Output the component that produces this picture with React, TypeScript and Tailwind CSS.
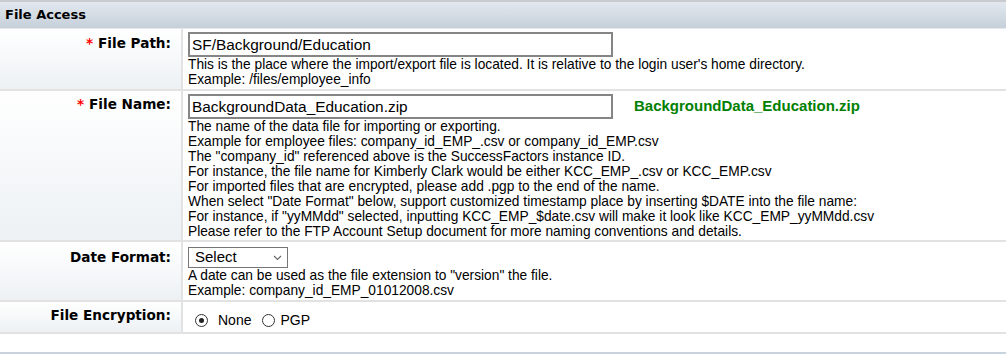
import React from "react";

const help = "text-[13.75px] leading-[15px] text-black";
const labelFont = { fontFamily: '"DejaVu Sans", Verdana, sans-serif' };

function Row({
  req,
  label,
  labelPt,
  children,
  contentClass,
}: {
  req?: boolean;
  label: string;
  labelPt: string;
  children: React.ReactNode;
  contentClass: string;
}) {
  return (
    <div className="flex border-b-2 border-[#e2e2e2]">
      <div
        className={
          "w-[183px] shrink-0 text-right pr-[10px] border-r-2 border-[#e2e2e2] bg-gradient-to-b from-white to-[#edf1f4] font-bold text-[13.6px] leading-[16px] text-black " +
          labelPt
        }
        style={labelFont}
      >
        {req && <span className="text-[#ff0000] mr-[5px]">*</span>}
        {label}
      </div>
      <div className={"flex-1 pl-[5px] " + contentClass}>{children}</div>
    </div>
  );
}

export default function App() {
  return (
    <div
      className="w-[1006px] h-[354px] bg-white overflow-hidden"
      style={{ fontFamily: '"Liberation Sans", Arial, sans-serif' }}
    >
      <div className="h-[2px] bg-[#c8ccd1]" />
      <div
        className="h-[26px] bg-gradient-to-b from-[#e2e8ee] to-[#c6d0da] pl-[5px] flex items-center font-bold text-[13px] text-black"
        style={labelFont}
      >
        File Access
      </div>
      <div className="h-[1px] bg-[#e6e9ec]" />

      <Row req label="File Path:" labelPt="pt-[6px]" contentClass="pt-[3px] pb-[2px]">
        <input
          readOnly
          value="SF/Background/Education"
          className="block w-[425px] h-[25px] border-2 border-[#858585] px-[2px] text-[15.4px] text-black outline-none"
          style={{ fontFamily: '"Liberation Sans", Arial, sans-serif' }}
        />
        <div className={help}>
          This is the place where the import/export file is located. It is relative to the login user's home directory.
          <br />
          Example: /files/employee_info
        </div>
      </Row>

      <Row req label="File Name:" labelPt="pt-[5px]" contentClass="pt-[3px] pb-[1px]">
        <div className="flex items-center">
          <input
            readOnly
            value="BackgroundData_Education.zip"
            className="block w-[425px] h-[25px] border-2 border-[#858585] px-[2px] text-[15.4px] text-black outline-none"
            style={{ fontFamily: '"Liberation Sans", Arial, sans-serif' }}
          />
          <span className="ml-[21px] text-[15px] font-bold text-[#008000]">BackgroundData_Education.zip</span>
        </div>
        <div className={help}>
          The name of the data file for importing or exporting.
          <br />
          Example for employee files: company_id_EMP_.csv or company_id_EMP.csv
          <br />
          The "company_id" referenced above is the SuccessFactors instance ID.
          <br />
          For instance, the file name for Kimberly Clark would be either KCC_EMP_.csv or KCC_EMP.csv
          <br />
          For imported files that are encrypted, please add .pgp to the end of the name.
          <br />
          When select "Date Format" below, support customized timestamp place by inserting $DATE into the file name:
          <br />
          For instance, if "yyMMdd" selected, inputting KCC_EMP_$date.csv will make it look like KCC_EMP_yyMMdd.csv
          <br />
          Please refer to the FTP Account Setup document for more naming conventions and details.
        </div>
      </Row>

      <Row label="Date Format:" labelPt="pt-[7px]" contentClass="pt-[5px] pb-[2px]">
        <div className="w-[100px] h-[21px] border border-[#767676] flex items-center justify-between pl-[6px] pr-[5px] text-[15px] text-black">
          <span>Select</span>
          <svg width="9" height="6" viewBox="0 0 9 6">
            <path d="M1 1 L4.5 4.5 L8 1" fill="none" stroke="#666" strokeWidth="1.1" />
          </svg>
        </div>
        <div className={help}>
          A date can be used as the file extension to "version" the file.
          <br />
          Example: company_id_EMP_01012008.csv
        </div>
      </Row>

      <Row label="File Encryption:" labelPt="pt-[5px]" contentClass="h-[30px] pl-[12px] flex items-center pt-[6px]">
        <div className="flex items-center text-[14px] text-black">
          <span className="w-[13px] h-[13px] rounded-full border border-[#333] flex items-center justify-center">
            <span className="w-[5px] h-[5px] rounded-full bg-[#222]" />
          </span>
          <span className="ml-[10px] mt-[1px]">None</span>
          <span className="w-[13px] h-[13px] rounded-full border border-[#333] ml-[11px]" />
          <span className="ml-[5px] mt-[1px]">PGP</span>
        </div>
      </Row>

      <div className="h-[18px]" />
      <div className="h-[3px] bg-[#c9d3dd]" />
    </div>
  );
}
